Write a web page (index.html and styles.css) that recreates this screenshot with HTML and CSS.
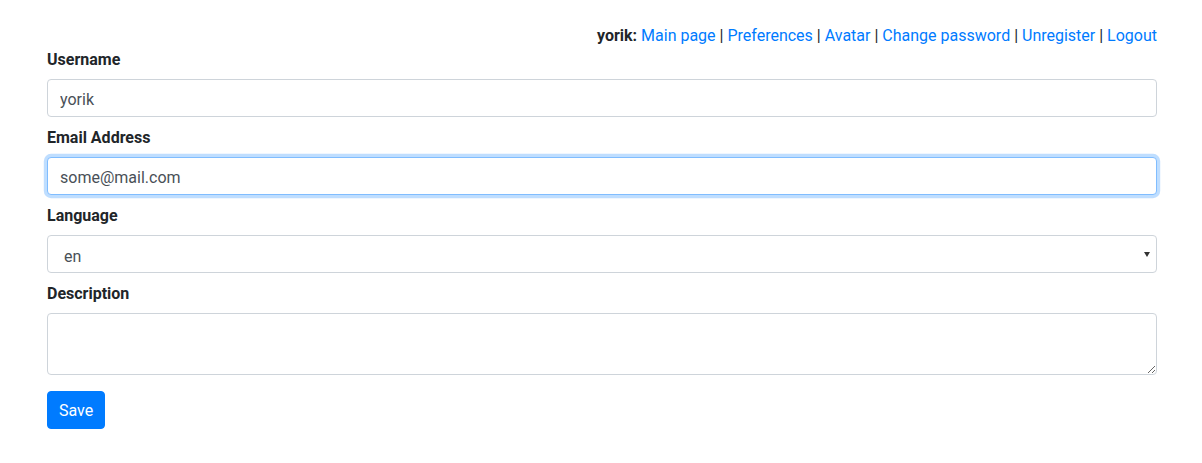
FILE: index.html
```html
<!DOCTYPE html>
<html>
<head>
<meta charset="utf-8">
<link rel="stylesheet" href="styles.css">
</head>
<body>
<div class="container">
  <div class="usernav">
    <b>yorik:</b> <a href="#">Main page</a> | <a href="#">Preferences</a> | <a href="#">Avatar</a> | <a href="#">Change password</a> | <a href="#">Unregister</a> | <a href="#">Logout</a>
  </div>
  <form class="form">
    <div class="form-group">
      <label class="label" for="username">Username</label>
      <input class="form-control" id="username" type="text" value="yorik">
    </div>
    <div class="form-group">
      <label class="label" for="email">Email Address</label>
      <input class="form-control is-focused" id="email" type="email" value="some@mail.com">
    </div>
    <div class="form-group">
      <label class="label" for="language">Language</label>
      <div class="select-wrap">
        <select class="form-control form-select" id="language">
          <option>en</option>
        </select>
      </div>
    </div>
    <div class="form-group form-group-last">
      <label class="label" for="description">Description</label>
      <textarea class="form-control form-textarea" id="description" rows="2"></textarea>
    </div>
    <button class="btn-primary" type="button">Save</button>
  </form>
</div>
</body>
</html>
```
FILE: styles.css
```css
html, body {
  margin: 0;
  padding: 0;
  background: #fff;
}
body {
  font-family: Roboto, "Noto Sans", sans-serif;
  font-size: 16px;
  line-height: 24px;
  color: #212529;
}
.container {
  margin: 0 45px 0 47px;
  padding-top: 23px;
}
.usernav {
  text-align: right;
  padding-top: 1px;
  line-height: 23px;
  color: #212529;
}
.usernav b {
  font-weight: 700;
}
.usernav a {
  color: #007bff;
  text-decoration: none;
}
.form {
  margin: 0;
}
.form-group {
  display: flex;
  flex-direction: column;
  margin-bottom: 8px;
}
.form-group-last {
  margin-bottom: 16px;
}
.label {
  display: block;
  font-weight: 700;
  padding-top: 1px;
  line-height: 24px;
  margin-bottom: 7px;
}
.form-control {
  display: block;
  box-sizing: border-box;
  width: 100%;
  height: 38px;
  margin: 0;
  padding: 7px 12px 5px;
  font-family: Roboto, "Noto Sans", sans-serif;
  font-size: 16px;
  line-height: 24px;
  color: #495057;
  background: #fff;
  border: 1px solid #ced4da;
  border-radius: 4px;
  outline: none;
}
.is-focused {
  border-color: #80bdff;
  box-shadow: 0 0 0 3.2px rgba(0, 123, 255, 0.25);
}
.select-wrap {
  position: relative;
}
.select-wrap::after {
  content: "";
  position: absolute;
  right: 7px;
  top: 17px;
  border-left: 3.5px solid transparent;
  border-right: 3.5px solid transparent;
  border-top: 5px solid #333;
  pointer-events: none;
}
.form-select {
  appearance: none;
  -webkit-appearance: none;
  padding: 9px 16px 3px;
}
.form-textarea {
  height: 62px;
  resize: vertical;
}
.btn-primary {
  display: inline-block;
  box-sizing: border-box;
  height: 38px;
  padding: 7px 11px 5px;
  font-family: Roboto, "Noto Sans", sans-serif;
  font-size: 16px;
  line-height: 24px;
  color: #fff;
  background: #007bff;
  border: 1px solid #007bff;
  border-radius: 4px;
}
```
